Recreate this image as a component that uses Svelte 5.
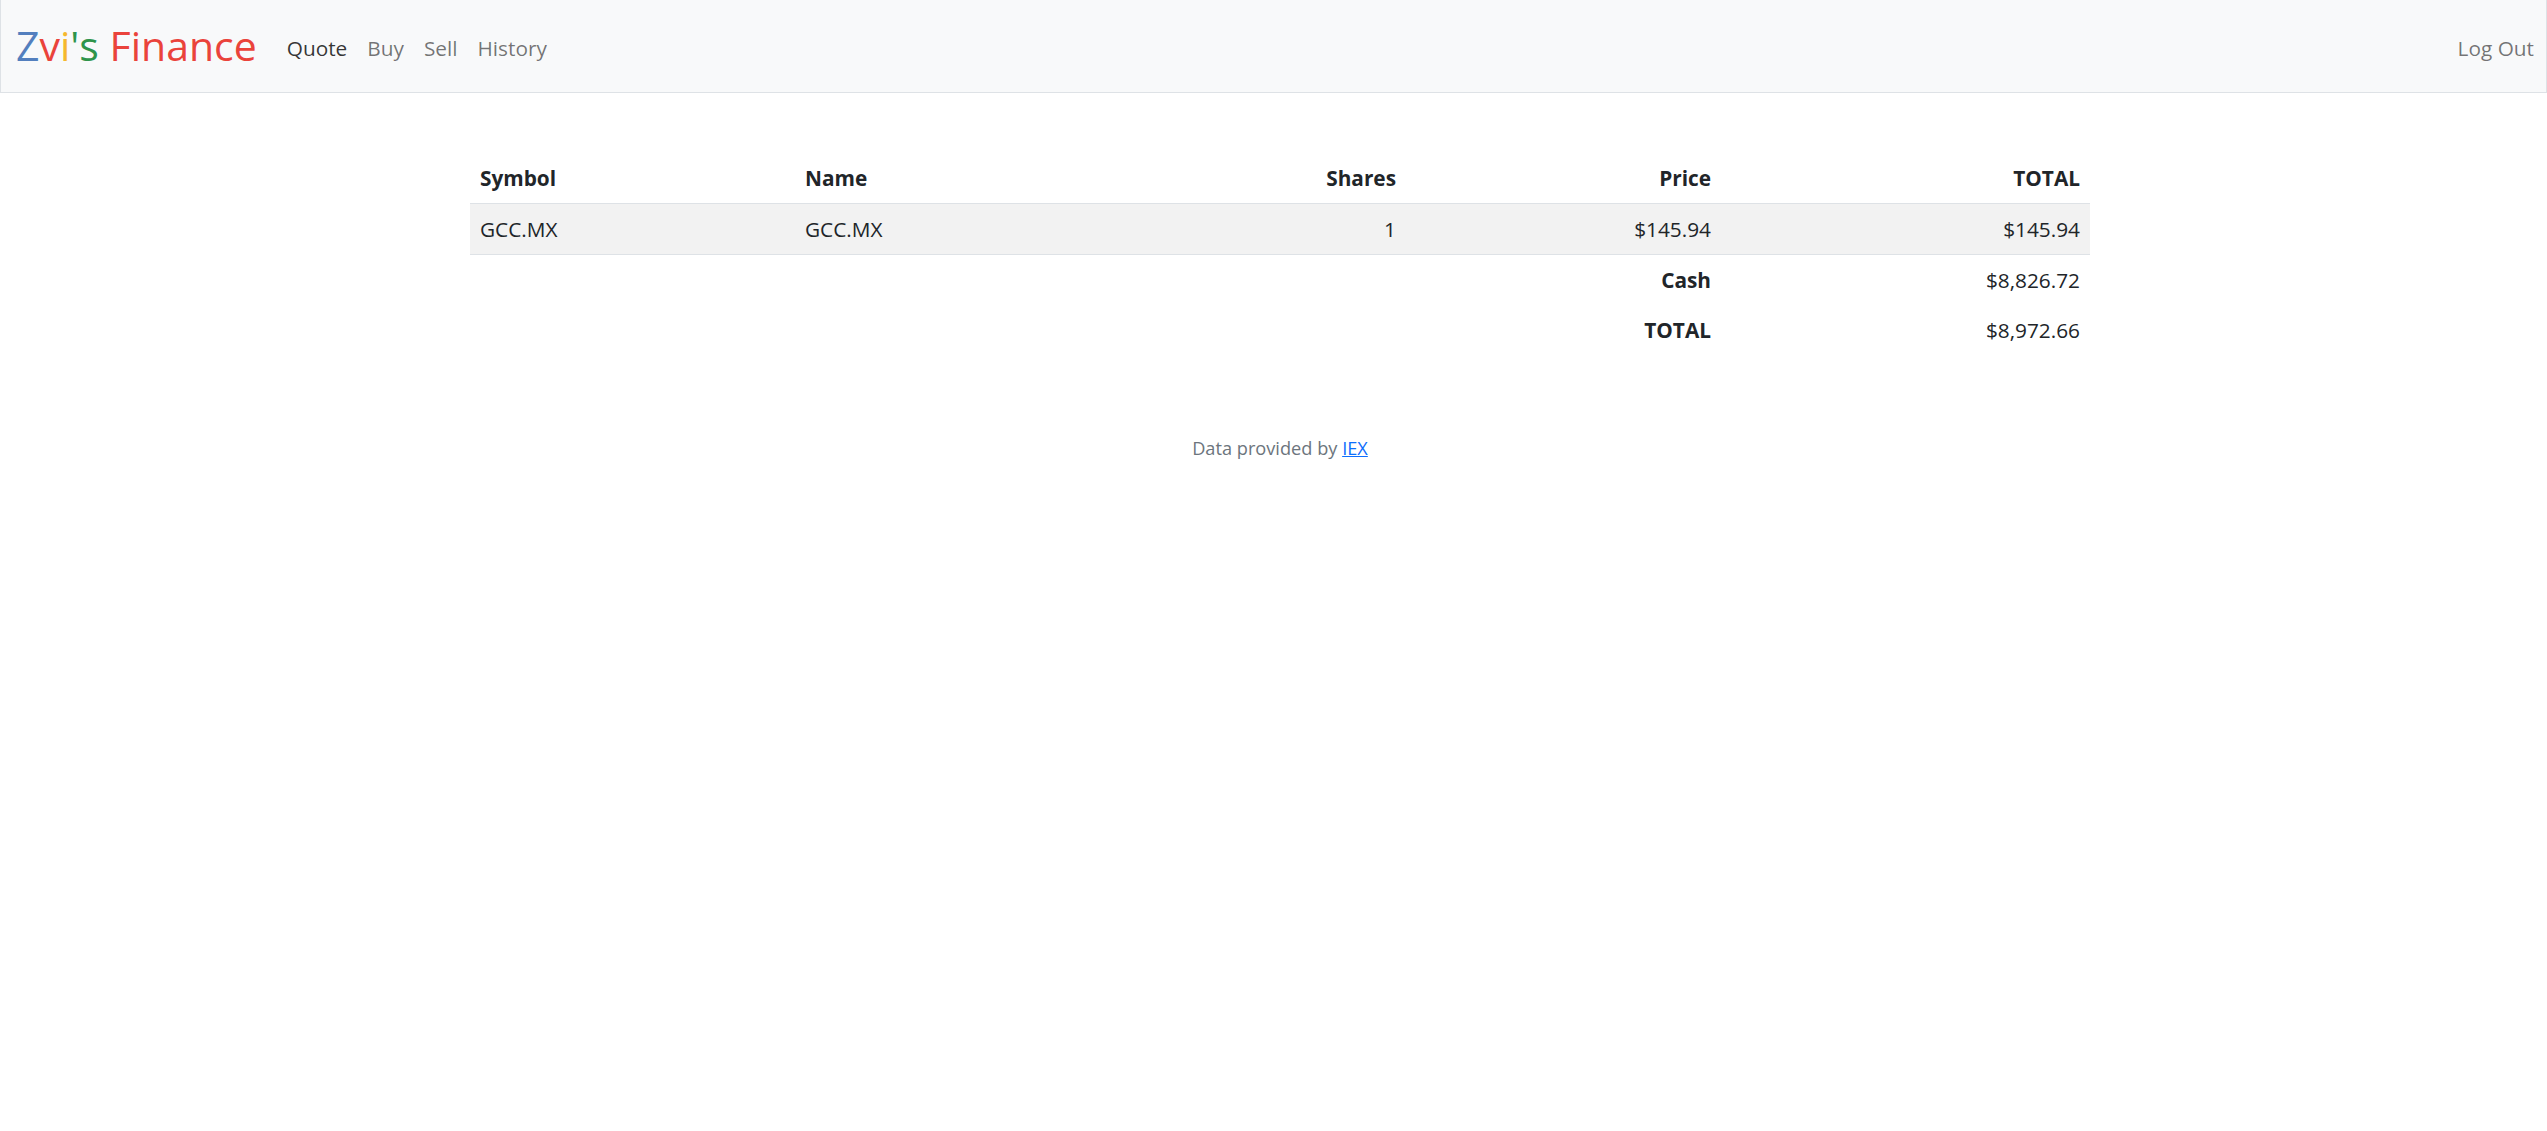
<script>
  const rows = [{ symbol: 'GCC.MX', name: 'GCC.MX', shares: 1, price: '$145.94', total: '$145.94' }];
</script>

<nav class="navbar">
  <a class="brand" href="/"><span class="blue">Z</span><span class="red">v</span><span class="yellow">i</span><span class="green">'s</span> <span class="red">Finance</span></a>
  <ul class="links">
    <li><a class="active" href="/quote">Quote</a></li>
    <li><a href="/buy">Buy</a></li>
    <li><a href="/sell">Sell</a></li>
    <li><a href="/history">History</a></li>
  </ul>
  <a class="logout" href="/logout">Log Out</a>
</nav>

<main>
  <table>
    <thead>
      <tr>
        <th class="c1">Symbol</th>
        <th class="c2">Name</th>
        <th class="c3 r">Shares</th>
        <th class="c4 r">Price</th>
        <th class="c5 r">TOTAL</th>
      </tr>
    </thead>
    <tbody>
      {#each rows as row}
        <tr class="striped">
          <td>{row.symbol}</td>
          <td>{row.name}</td>
          <td class="r">{row.shares}</td>
          <td class="r">{row.price}</td>
          <td class="r">{row.total}</td>
        </tr>
      {/each}
    </tbody>
    <tfoot>
      <tr><td colspan="3"></td><th class="r">Cash</th><td class="r">$8,826.72</td></tr>
      <tr><td colspan="3"></td><th class="r">TOTAL</th><td class="r">$8,972.66</td></tr>
    </tfoot>
  </table>
  <footer>Data provided by <a href="https://iextrading.com">IEX</a></footer>
</main>

<style>
  :global(body) {
    margin: 0;
    background: #fff;
    color: #212529;
    font-family: "Open Sans", "Noto Sans", sans-serif;
    font-size: 20.8px;
    line-height: 30px;
  }
  .navbar {
    display: flex;
    align-items: flex-start;
    height: 93px;
    box-sizing: border-box;
    padding: 15px 2px 0 15px;
    background: #f8f9fa;
    border: 1px solid #dee2e6;
    border-top: 0;
  }
  .brand {
    font-size: 41px;
    line-height: 60px;
    text-decoration: none;
    margin-right: 20px;
    white-space: nowrap;
  }
  .blue { color: #537fbe; }
  .yellow { color: #f5b82e; }
  .green { color: #2e944b; }
  .red { color: #ea433b; }
  .links {
    display: flex;
    list-style: none;
    margin: 0;
    padding: 0;
    flex: 1;
  }
  .links a, .logout {
    display: block;
    padding: 18px 10px 8px;
    color: rgba(0, 0, 0, 0.55);
    text-decoration: none;
  }
  .links a.active { color: rgba(0, 0, 0, 0.8); }
  main {
    width: 1620px;
    margin: 60px 0 0 470px;
  }
  table {
    width: 1620px;
    border-collapse: collapse;
    table-layout: fixed;
  }
  th, td {
    padding: 10px;
    height: 50px;
    box-sizing: border-box;
    font-weight: 400;
    text-align: left;
    color: #212529;
  }
  th { font-weight: 700; }
  .c1 { width: 325px; }
  .c2 { width: 325px; }
  .c3 { width: 286px; }
  .c4 { width: 315px; }
  .c5 { width: 369px; }
  th.r, td.r { text-align: right; }
  .striped td {
    background: #f2f2f2;
    border-top: 1px solid #dee2e6;
    border-bottom: 1px solid #dee2e6;
  }
  footer {
    margin-top: 80px;
    text-align: center;
    font-size: 18.2px;
    line-height: 27px;
    color: #6c757d;
  }
  footer a { color: #0d6efd; }
</style>
